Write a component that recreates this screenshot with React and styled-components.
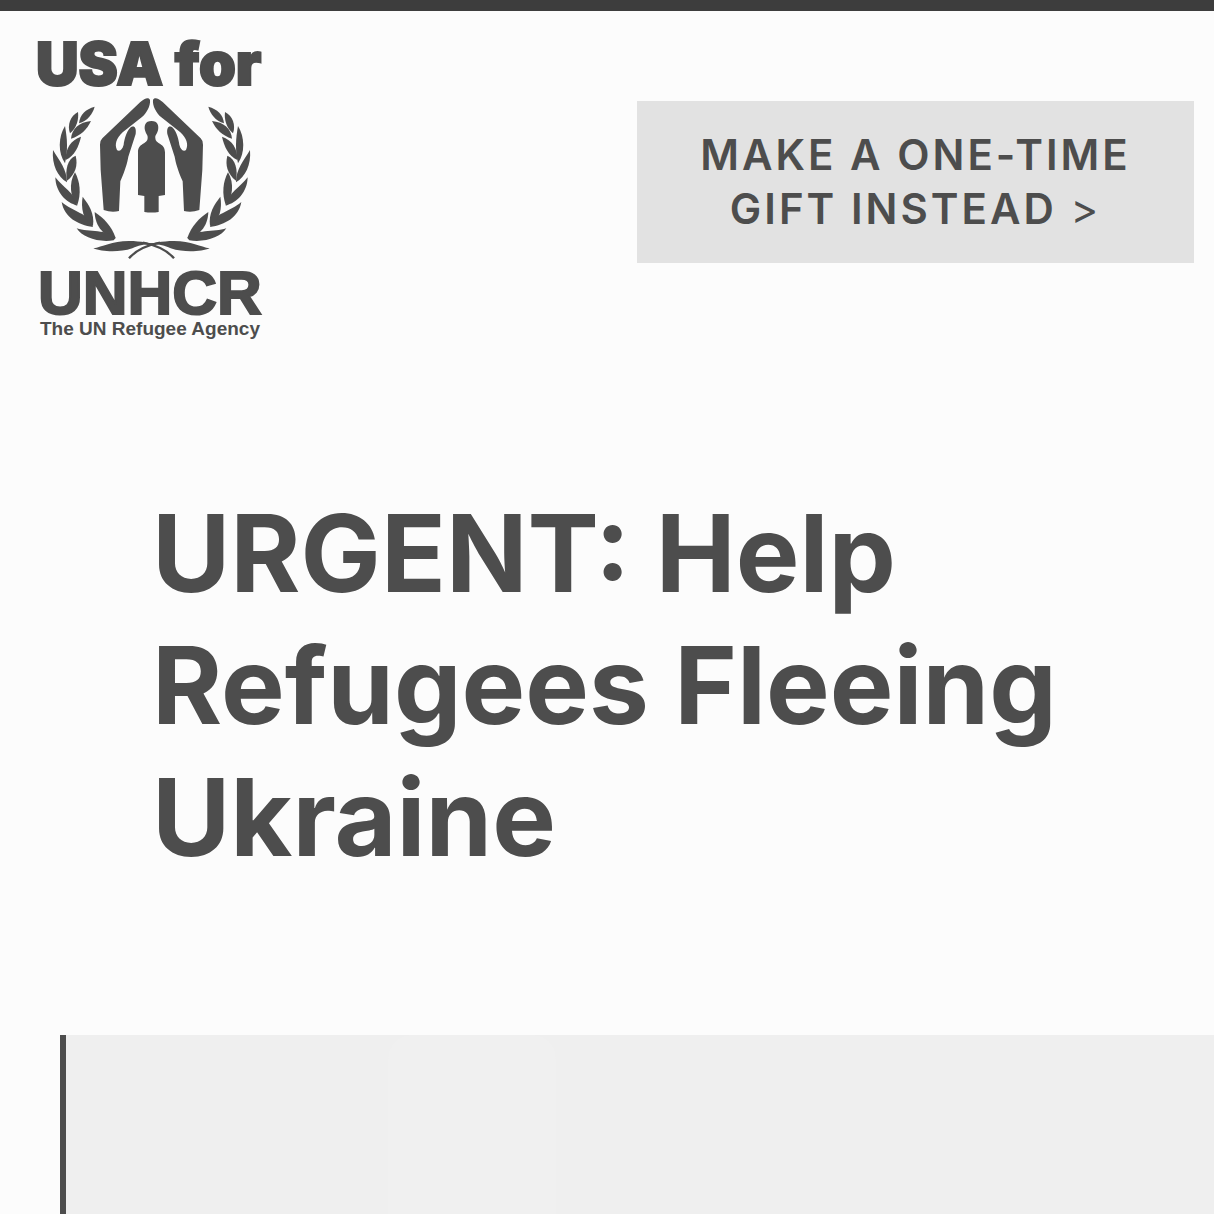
import React from "react";
import styled, { createGlobalStyle } from "styled-components";

const ink = "#4d4d4d";

const GlobalStyle = createGlobalStyle`
  *, *::before, *::after { box-sizing: border-box; }
  body {
    margin: 0;
    background: #fcfcfc;
    color: ${ink};
    font-family: Inter, Roboto, sans-serif;
  }
`;

const Page = styled.div`
  min-height: 100vh;
  display: flex;
  flex-direction: column;
`;

const TopBar = styled.div`
  height: 11px;
  background: #3d3d3d;
`;

const Header = styled.header`
  display: flex;
  justify-content: space-between;
  align-items: flex-start;
  padding: 9px 20px 0 36px;
`;

const LogoLink = styled.a`
  display: block;
  flex: none;
  color: inherit;
`;

const LogoArt = styled.svg`
  display: block;
  width: 236px;
  height: 324px;
  fill: currentColor;
`;

const LogoWord = styled.text`
  font-family: ${(p) => p.$family};
  font-size: ${(p) => p.$size}px;
  font-weight: ${(p) => p.$weight};
  stroke: currentColor;
  stroke-width: ${(p) => p.$stroke || 0}px;
`;

const GiftLink = styled.a`
  width: 557px;
  margin-top: 81px;
  padding: 27px 56px;
  background: #e2e2e2;
  color: inherit;
  font-size: 42px;
  font-weight: 600;
  line-height: 54px;
  letter-spacing: 3px;
  text-align: center;
  text-decoration: none;
  text-transform: uppercase;
`;

const Chevron = styled.span`
  font-weight: 400;
`;

const Main = styled.main`
  flex: 1;
  display: flex;
  flex-direction: column;
`;

const Title = styled.h1`
  margin: 0;
  padding: 143px 120px 152px 152px;
  font-size: 107px;
  font-weight: 700;
  line-height: 132px;
`;

const Panel = styled.section`
  flex: 1;
  display: flex;
  min-height: 179px;
  margin-left: 60px;
  padding-left: 322px;
  border-left: 6px solid ${ink};
  background: #efefef;
`;

const PanelTab = styled.div`
  width: 168px;
  border-radius: 24px 24px 0 0;
  background: #f0f0f0;
`;

const leaves = [
  "M149 50C122 57 104 75 102 100C128 92 143 72 149 50Z",
  "M138 93C103 96 80 117 78 146C107 137 126 119 138 93Z",
  "M99 66C76 77 66 106 75 130C94 115 102 90 99 66Z",
  "M60 108C40 140 38 188 60 220C69 180 67 147 60 108Z",
  "M108 140C78 150 61 175 62 210C89 197 101 170 108 140Z",
  "M24 180C20 225 38 260 66 277C66 238 43 212 24 180Z",
  "M92 197C67 207 60 240 66 272C92 252 99 225 92 197Z",
  "M31 262C32 307 63 338 97 347C89 308 53 292 31 262Z",
  "M90 247C70 280 76 325 97 345C109 310 105 275 90 247Z",
  "M50 336C58 382 98 404 144 411C132 368 83 366 50 336Z",
  "M113 320C107 354 114 392 144 408C149 370 132 345 113 320Z",
  "M149 366C150 402 170 437 212 444C200 408 177 385 149 366Z",
  "M95 415C112 442 158 458 206 451L212 444C188 417 132 428 95 415Z",
];

function EmblemHalf() {
  return (
    <g>
      {leaves.map((d) => (
        <path key={d} d={d} />
      ))}
      <path d="M315 30C312 21 300 23 286 36L172 145Q164 153 165 164L167 240L176 360Q200 369 222 363L226 274C240 242 247 218 250 200L272 132C275 111 266 104 255 114C243 127 238 150 236 164C232 180 222 186 216 180C208 164 214 145 233 127L290 82C305 70 317 47 315 30Z" />
      <path d="M145 475C172 471 200 453 252 453C290 453 312 460 346 464C300 461 286 465 262 475C220 489 170 485 145 475Z" />
      <path
        d="M252 505C272 481 300 467 345 458"
        fill="none"
        stroke="currentColor"
        strokeWidth="7"
      />
    </g>
  );
}

function Logo() {
  return (
    <LogoArt viewBox="36 20 236 324" role="img" aria-label="USA for UNHCR, The UN Refugee Agency">
      <LogoWord x="36" y="85" $family="Inter, sans-serif" $size={59} $weight={900} $stroke={2}>
        USA for
      </LogoWord>
      <g transform="translate(45 90) scale(.33333)">
        <EmblemHalf />
        <g transform="translate(639 0) scale(-1 1)">
          <EmblemHalf />
        </g>
        <path d="M319.500 93C300 93 297 108 300 121C303 133 309 135 308 144C307 164 279 158 279 187V315L298 318V366Q319.500 369 341 366V318L360 315V187C360 158 332 164 331 144C330 135 336 133 339 121C342 108 339 93 319.500 93Z" />
      </g>
      <LogoWord x="38" y="314" $family='"Liberation Sans", Arial, sans-serif' $size={62} $weight={700} $stroke={2}>
        UNHCR
      </LogoWord>
      <LogoWord x="40" y="335" $family='"Liberation Sans", Arial, sans-serif' $size={19} $weight={700}>
        The UN Refugee Agency
      </LogoWord>
    </LogoArt>
  );
}

export default function App() {
  return (
    <Page>
      <GlobalStyle />
      <TopBar />
      <Header>
        <LogoLink href="#home">
          <Logo />
        </LogoLink>
        <GiftLink href="#one-time">
          Make a one-time gift instead <Chevron>&gt;</Chevron>
        </GiftLink>
      </Header>
      <Main>
        <Title>URGENT: Help Refugees Fleeing Ukraine</Title>
        <Panel>
          <PanelTab />
        </Panel>
      </Main>
    </Page>
  );
}
